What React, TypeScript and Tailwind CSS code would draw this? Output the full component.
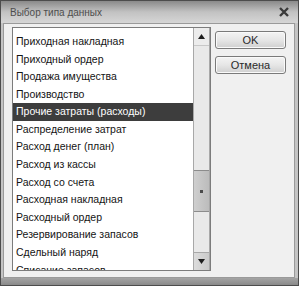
const items = [
  'Приходная накладная',
  'Приходный ордер',
  'Продажа имущества',
  'Производство',
  'Прочие затраты (расходы)',
  'Распределение затрат',
  'Расход денег (план)',
  'Расход из кассы',
  'Расход со счета',
  'Расходная накладная',
  'Расходный ордер',
  'Резервирование запасов',
  'Сдельный наряд',
  'Списание запасов'
];

const selected = 4;

const DialogButton = ({ label }: { label: string }) => (
  <button className="h-[18px] w-[71px] rounded-[3px] border border-[#7a7a7a] bg-gradient-to-b from-[#f4f4f4] via-[#e6e6e6] to-[#cfcfcf] text-[11px] leading-none text-[#2a2a2a] shadow-[inset_0_0_0_1px_#fafafa]">
    {label}
  </button>
);

const Arrow = ({ up }: { up?: boolean }) => (
  <svg width="7" height="5" viewBox="0 0 7 5">
    <path d={up ? 'M3.5 0 L7 5 L0 5 Z' : 'M0 0 L7 0 L3.5 5 Z'} fill="#1e1e1e" />
  </svg>
);

export default function App() {
  return (
    <div
      className="flex h-[286px] w-[299px] flex-col overflow-hidden border border-[#4c4c4c] bg-[#bdbdbd]"
      style={{ fontFamily: '"Liberation Sans", Arial, sans-serif' }}
    >
      {/* title bar */}
      <div className="flex h-[22px] shrink-0 items-center justify-between bg-gradient-to-b from-[#8a8a8a] via-[#c2c2c2] to-[#d6d6d6] pl-[9px] pr-[9px]">
        <span className="text-[10px] text-[#4e4e4e]">Выбор типа данных</span>
        <svg width="10" height="10" viewBox="0 0 10 10">
          <path d="M1 1 L9 9 M9 1 L1 9" stroke="#3a3a3a" strokeWidth="2.4" />
        </svg>
      </div>

      <div className="flex min-h-0 flex-1">
        <div className="w-[2px] bg-[#c4c4c4]" />
        {/* client area */}
        <div className="flex flex-1 gap-[4px] border border-[#9a9a9a] bg-[#f0f0f0] pl-[8px] pr-[7px] pt-[3px]">
          {/* list box */}
          <div className="flex h-[244px] w-[199px] border border-[#7c7c7c] bg-white">
            <div className="flex-1 overflow-hidden pt-[5px]">
              {items.map((item, i) => (
                <div
                  key={item}
                  className={
                    i === selected
                      ? 'flex h-[17.6px] items-center bg-[#3d3d3d] pl-[3px] text-[10.5px] text-white'
                      : 'flex h-[17.6px] items-center pl-[3px] text-[10.5px] text-[#141414]'
                  }
                >
                  {item}
                </div>
              ))}
            </div>
            {/* scrollbar */}
            <div className="flex w-[17px] flex-col border-x border-[#a8a8a8] bg-[#e9e9e9]">
              <div className="flex h-[18px] items-center justify-center border-b border-[#c8c8c8] bg-[#ececec]">
                <Arrow up />
              </div>
              <div className="flex flex-1 flex-col">
                <div className="h-[124px]" />
                <div className="flex h-[42px] items-center justify-center border-y border-[#8c8c8c] bg-gradient-to-r from-[#cfcfcf] to-[#bcbcbc]">
                  <div className="h-[3px] w-[3px] bg-[#4a4a4a]" />
                </div>
              </div>
              <div className="flex h-[18px] items-center justify-center border-t border-[#a8a8a8] bg-gradient-to-r from-[#dcdcdc] to-[#cacaca]">
                <Arrow />
              </div>
            </div>
          </div>

          {/* buttons */}
          <div className="flex flex-col gap-[7px] pt-[4px]">
            <DialogButton label="OK" />
            <DialogButton label="Отмена" />
          </div>
        </div>
        <div className="w-[3px] bg-[#c4c4c4]" />
      </div>

      {/* bottom frame */}
      <div className="h-[7px] shrink-0 bg-gradient-to-b from-[#a4a4a4] to-[#8a8a8a]" />
    </div>
  );
}
